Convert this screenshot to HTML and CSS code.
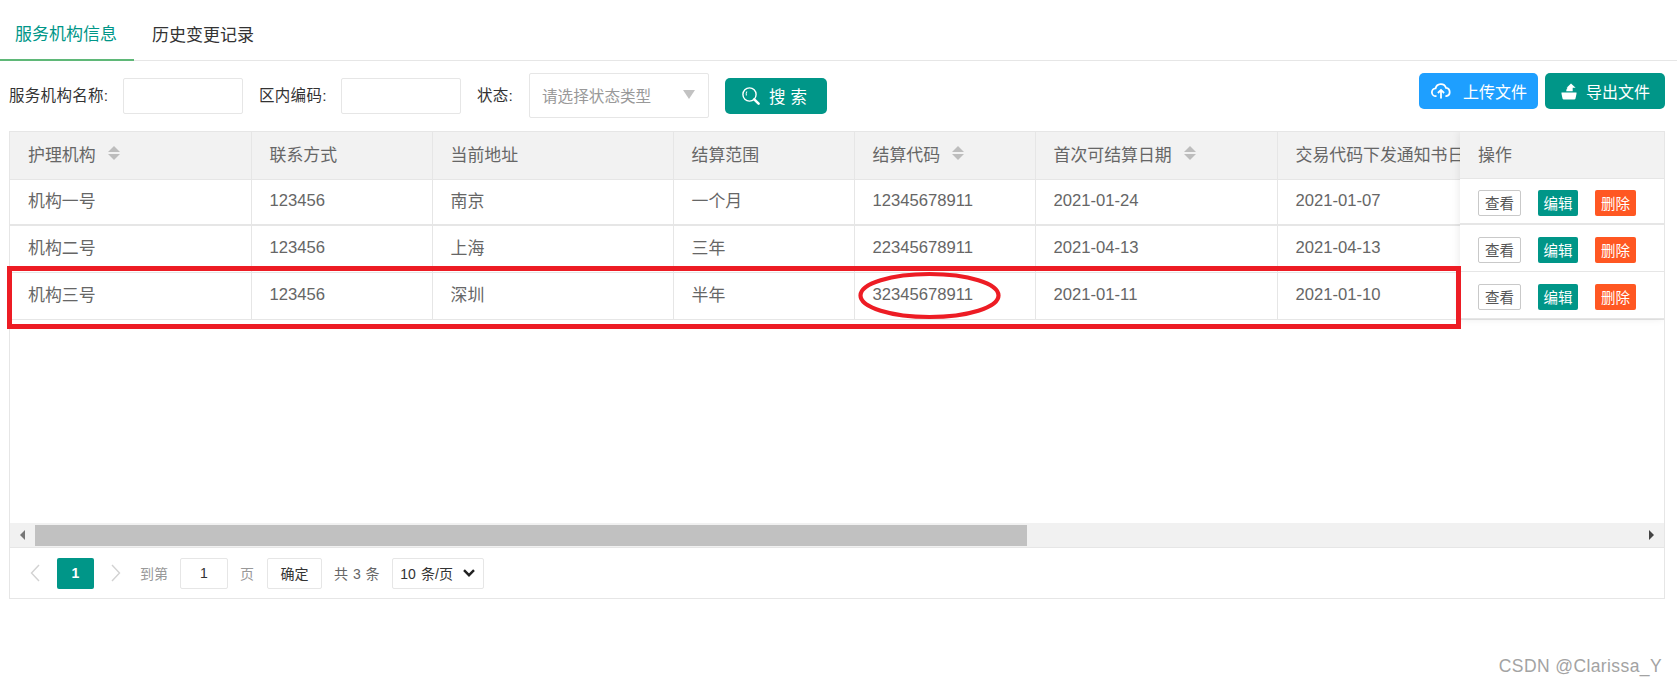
FILE: index.html
```html
<!DOCTYPE html>
<html lang="zh-CN">
<head>
<meta charset="utf-8">
<title>服务机构信息</title>
<link rel="stylesheet" href="styles.css">
</head>
<body>
<div class="page">
  <nav class="tabs">
    <a class="tab active">服务机构信息</a>
    <a class="tab">历史变更记录</a>
  </nav>

  <section class="toolbar">
    <form class="filters">
      <label class="flabel">服务机构名称:</label>
      <input class="finput" type="text">
      <label class="flabel second">区内编码:</label>
      <input class="finput" type="text">
      <label class="flabel third">状态:</label>
      <div class="fselect"><span>请选择状态类型</span><i class="tri-down"></i></div>
      <button class="btn btn-search" type="button">
        <svg width="20" height="20" viewBox="0 0 20 20" fill="none" stroke="#fff"><circle cx="8.5" cy="8.5" r="6.6" stroke-width="1.4"/><path d="M6 5.5a3.6 3.6 0 0 0-.6 4" stroke-width="1.1"/><path d="M13.2 13.4l4.4 4.2" stroke-width="2.6" stroke-linecap="round"/></svg>
        <span class="spaced">搜索</span>
      </button>
    </form>
    <div class="actions">
      <button class="btn btn-blue" type="button">
        <svg width="20" height="18" viewBox="0 0 20 18" fill="none" stroke="#fff" stroke-width="1.8"><path d="M5.5 14.2H5A3.9 3.9 0 0 1 4.6 6.4 5.4 5.4 0 0 1 15 5.9a4.2 4.2 0 0 1 .2 8.3h-.8"/><path d="M10 16.5V8.2M6.9 11l3.1-3.1 3.1 3.1"/></svg>
        <span class="upload-text">上传文件</span>
      </button>
      <button class="btn btn-teal" type="button">
        <svg class="export-icon" width="16" height="17" viewBox="0 0 16 17" fill="#fff"><path d="M10 0.5l4.6 4.2h-2.9v3.6H5.2c0-2.6 1.6-3.9 3-4V4.7H5.6z"/><path d="M0.5 9.4h15v1.4l-1 4.6a1.4 1.4 0 0 1-1.4 1.1H2.9a1.4 1.4 0 0 1-1.4-1.1l-1-4.6z"/></svg>
        <span class="export-text">导出文件</span>
      </button>
    </div>
  </section>

  <section class="grid">
    <div class="grid-body">
      <table class="data">
        <colgroup><col class="c1"><col class="c2"><col class="c3"><col class="c4"><col class="c5"><col class="c6"><col class="c7"></colgroup>
        <thead>
          <tr>
            <th><span class="th-in">护理机构<i class="sort"></i></span></th>
            <th>联系方式</th>
            <th>当前地址</th>
            <th>结算范围</th>
            <th><span class="th-in">结算代码<i class="sort"></i></span></th>
            <th><span class="th-in">首次可结算日期<i class="sort"></i></span></th>
            <th><div class="clip">交易代码下发通知书日期</div></th>
          </tr>
        </thead>
        <tbody>
          <tr class="r1"><td>机构一号</td><td class="num">123456</td><td>南京</td><td>一个月</td><td class="num">12345678911</td><td class="num">2021-01-24</td><td class="num">2021-01-07</td></tr>
          <tr class="r2"><td>机构二号</td><td class="num">123456</td><td>上海</td><td>三年</td><td class="num">22345678911</td><td class="num">2021-04-13</td><td class="num">2021-04-13</td></tr>
          <tr class="r3"><td>机构三号</td><td class="num">123456</td><td>深圳</td><td>半年</td><td class="num">32345678911</td><td class="num">2021-01-11</td><td class="num">2021-01-10</td></tr>
        </tbody>
      </table>
      <aside class="fixed">
        <div class="fx-head">操作</div>
        <div class="fx-row r1"><a class="mini mini-plain">查看</a><a class="mini mini-teal">编辑</a><a class="mini mini-orange">删除</a></div>
        <div class="fx-row r2"><a class="mini mini-plain">查看</a><a class="mini mini-teal">编辑</a><a class="mini mini-orange">删除</a></div>
        <div class="fx-row r3"><a class="mini mini-plain">查看</a><a class="mini mini-teal">编辑</a><a class="mini mini-orange">删除</a></div>
      </aside>
    </div>

    <div class="scrollbar">
      <span class="sb-btn"><i class="tri-left"></i></span>
      <div class="sb-track"><div class="sb-thumb"></div></div>
      <span class="sb-btn"><i class="tri-right"></i></span>
    </div>

    <div class="pager">
      <svg class="chev first" width="10" height="18" viewBox="0 0 10 18" fill="none" stroke="#d2d2d2" stroke-width="1.4"><path d="M9 1L1.5 9 9 17"/></svg>
      <span class="pg-current">1</span>
      <svg class="chev next" width="10" height="18" viewBox="0 0 10 18" fill="none" stroke="#d2d2d2" stroke-width="1.4"><path d="M1 1l7.5 8L1 17"/></svg>
      <span class="pg-muted goto">到第</span>
      <span class="pg-box pg-input">1</span>
      <span class="pg-muted page-word">页</span>
      <span class="pg-box pg-ok">确定</span>
      <span class="pg-total">共 3 条</span>
      <span class="pg-box pg-size">10 条/页<svg width="12" height="8" viewBox="0 0 12 8" fill="none" stroke="#222" stroke-width="2.4"><path d="M1 1.2l5 5 5-5"/></svg></span>
    </div>
  </section>

  <footer class="mark">CSDN @Clarissa_Y</footer>

  <svg class="annotation" width="1677" height="685" viewBox="0 0 1677 685" fill="none" stroke="#ed1c24">
    <rect x="9.5" y="268.5" width="1449" height="58" stroke-width="5"/>
    <ellipse cx="929.5" cy="295.5" rx="69" ry="21.5" stroke-width="4.2"/>
  </svg>
</div>
</body>
</html>
```

FILE: styles.css
```css
* { box-sizing: border-box; }
html, body { margin: 0; padding: 0; background: #fff; }
body {
  font-family: "Liberation Sans", "Noto Sans CJK SC", sans-serif;
  color: #666;
  overflow: hidden;
}
.page { position: relative; width: 1677px; height: 685px; overflow: hidden; }

/* tabs */
.tabs { display: flex; gap: 4px; height: 61px; border-bottom: 1px solid #e6e6e6; }
.tab {
  display: flex; align-items: center;
  height: 61px; padding: 6px 18px 0 14px;
  font-size: 17px; color: #333;
}
.tab.active { color: #009688; border-bottom: 2px solid #5fb878; padding: 6px 17px 0 15px; }

/* toolbar */
.toolbar { display: flex; justify-content: space-between; align-items: flex-start; height: 70px; padding: 12px 12px 0 9px; }
.filters { display: flex; align-items: center; height: 45px; margin: 0; }
.flabel { font-size: 15.5px; letter-spacing: .3px; color: #333; white-space: nowrap; width: 114px; padding-bottom: 3px; }
.flabel.second { width: 82px; margin-left: 16px; }
.flabel.third { width: 52px; margin-left: 16px; }
.finput { width: 120px; height: 36px; border: 1px solid #e6e6e6; border-radius: 2px; background: #fff; padding: 0; }
.fselect {
  display: flex; align-items: center; justify-content: space-between;
  width: 180px; height: 45px; padding: 0 13px 2px 12px;
  border: 1px solid #e6e6e6; border-radius: 2px;
  font-size: 15.6px; color: #999;
}
.tri-down { width: 0; height: 0; border-left: 6.5px solid transparent; border-right: 6.5px solid transparent; border-top: 9px solid #c2c2c2; }

.btn {
  display: flex; align-items: center;
  height: 36px; border: 0; border-radius: 5px;
  color: #fff; font-family: inherit; font-size: 16px;
}
.btn-search { width: 102px; margin-left: 16px; padding: 0 0 0 16px; background: #009688; }
.spaced { margin-left: 8px; letter-spacing: 5px; font-size: 16.5px; }
.actions { display: flex; gap: 7px; }
.btn-blue { width: 119px; padding: 0 0 0 12px; background: #1e9fff; }
.upload-text { margin-left: 12px; }
.btn-teal { width: 120px; padding: 0 0 0 16px; background: #009688; }
.export-icon { flex: none; }
.export-text { margin-left: 9px; }

/* grid */
.grid { width: 1656px; margin-left: 9px; border: 1px solid #e6e6e6; height: 468px; }
.grid-body { position: relative; height: 391px; overflow: hidden; }
.data { table-layout: fixed; border-collapse: collapse; width: 1750px; font-size: 16.9px; color: #666; }
.c1 { width: 241px; } .c2 { width: 181px; } .c3 { width: 241px; } .c4 { width: 181px; }
.c5 { width: 181px; } .c6 { width: 242px; } .c7 { width: 483px; }
.data th, .data td {
  padding: 0 0 4px 18px; text-align: left; font-weight: 400;
  border-right: 1px solid #e6e6e6; border-bottom: 1px solid #e6e6e6;
  white-space: nowrap;
}
.data th { height: 47px; background: #f2f2f2; }
.data td.num { font-size: 16.65px; padding-bottom: 2px; }
.data .r1 td { height: 46px; border-bottom-width: 2px; }
.data .r2 td, .data .r3 td { height: 47px; }
.clip { width: 164px; overflow: hidden; }
.th-in { display: inline-flex; align-items: center; }
.sort { display: inline-flex; flex-direction: column; gap: 2px; margin-left: 12px; }
.sort::before, .sort::after { content: ""; width: 0; height: 0; border-left: 6px solid transparent; border-right: 6px solid transparent; }
.sort::before { border-bottom: 6px solid #bdbdbd; }
.sort::after { border-top: 6px solid #bdbdbd; }

.fixed {
  position: absolute; top: 0; right: 0; width: 204px; background: #fff;
  box-shadow: -1px 0 8px rgba(0,0,0,.08);
}
.fx-head { height: 47px; line-height: 47px; padding-left: 18px; font-size: 16.9px; background: #f2f2f2; border-bottom: 1px solid #e6e6e6; }
.fx-row { display: flex; align-items: center; padding: 3px 0 0 18px; border-bottom: 1px solid #e6e6e6; height: 47px; }
.fx-row.r1 { height: 46px; border-bottom-width: 2px; }
.mini {
  display: flex; align-items: center; justify-content: center;
  height: 26px; font-size: 14.5px; border-radius: 2px; color: #fff;
}
.mini-plain { width: 43px; color: #555; background: #fff; border: 1px solid #c9c9c9; }
.mini-teal { width: 40px; margin-left: 17px; background: #009688; }
.mini-orange { width: 41px; margin-left: 17px; background: #ff5722; }

/* scrollbar */
.scrollbar { display: flex; height: 24px; background: #f1f1f1; }
.sb-btn { display: flex; align-items: center; justify-content: center; width: 25px; }
.sb-track { flex: 1; padding: 2px 0 1px; }
.sb-thumb { width: 992px; height: 21px; background: #c1c1c1; }
.tri-left { border-top: 5px solid transparent; border-bottom: 5px solid transparent; border-right: 5px solid #777; }
.tri-right { border-top: 5px solid transparent; border-bottom: 5px solid transparent; border-left: 5px solid #444; }

/* pager */
.pager { display: flex; align-items: center; height: 51px; padding-left: 20px; border-top: 1px solid #e6e6e6; font-size: 14px; }
.chev { flex: none; }
.pg-current {
  display: flex; align-items: center; justify-content: center;
  width: 37px; height: 31px; margin-left: 17px; border-radius: 2px;
  background: #009688; color: #fff; font-weight: 700;
}
.chev.next { margin-left: 17px; }
.pg-muted { color: #999; }
.goto { margin-left: 19px; }
.pg-box {
  display: flex; align-items: center; justify-content: center;
  height: 31px; border: 1px solid #e6e6e6; border-radius: 2px; color: #333;
}
.pg-input { width: 48px; margin-left: 12px; }
.page-word { margin-left: 12px; }
.pg-ok { width: 55px; margin-left: 13px; }
.pg-total { margin-left: 12px; color: #666; word-spacing: 1px; }
.pg-size { width: 92px; margin-left: 12px; gap: 10px; word-spacing: 1.5px; }

/* watermark */
.mark { margin-top: 57px; padding-right: 15px; text-align: right; font-size: 17.5px; letter-spacing: .4px; color: #a3a3a3; }

/* markup drawn over the screenshot */
.annotation { position: absolute; top: 0; left: 0; pointer-events: none; }
```
